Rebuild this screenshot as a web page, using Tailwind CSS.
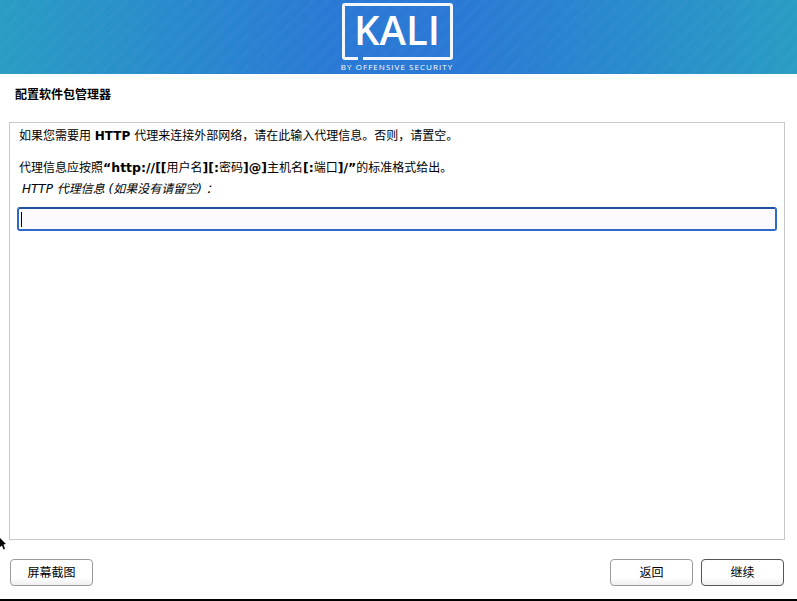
<!DOCTYPE html>
<html lang="zh">
<head>
    <meta charset="UTF-8">
    <title>配置软件包管理器</title>
    <script src="https://cdn.jsdelivr.net/npm/@tailwindcss/browser@4"></script>
</head>
<body class="w-[797px] h-[601px] overflow-hidden bg-white font-['DejaVu_Sans','Noto_Sans_CJK_SC',sans-serif] text-[12px] text-black relative">
    <!-- Banner -->
    <header class="h-[74px] flex justify-center bg-[repeating-linear-gradient(135deg,#ffffff05_0,#ffffff05_4px,transparent_4px,transparent_11px),linear-gradient(90deg,#299dc3_0%,#2a79d5_42%,#2a79d5_58%,#299dc3_100%)]">
        <div class="w-[111px] mr-[3px] pt-[3px] flex flex-col items-center text-white">
            <div class="relative w-[111px] h-[57px] border-[3px] border-[#f4f8fd] rounded-[3px] flex justify-center items-center">
                <span class="font-['Open_Sans',sans-serif] font-semibold text-[40px] leading-none mt-[-4px]">KALI</span>
                <span class="absolute left-[13px] bottom-[-3px] w-[5px] h-[3px] bg-[#2a79d5]"></span>
            </div>
            <span class="font-['Open_Sans',sans-serif] font-medium text-[8px] leading-none mt-[3px] tracking-[1.05px] whitespace-nowrap">BY OFFENSIVE SECURITY</span>
        </div>
    </header>

    <!-- Title -->
    <h1 class="h-[48px] pl-[15px] pt-[14px] text-[12px] leading-[14px] font-bold">配置软件包管理器</h1>

    <!-- Panel -->
    <main class="ml-[9px] w-[776px] h-[418px] border border-[#c8c8c8] pl-[9px] pt-[6px]">
        <p class="leading-[14px]">如果您需要用 <b>HTTP</b> 代理来连接外部网络，请在此输入代理信息。否则，请置空。</p>
        <p class="leading-[14px] mt-[18px]">代理信息应按照<b class="text-[12.5px]">“http://[[</b>用户名<b class="text-[12.5px]">][:</b>密码<b class="text-[12.5px]">]@]</b>主机名<b class="text-[12.5px]">[:</b>端口<b class="text-[12.5px]">]/”</b>的标准格式给出。</p>
        <label for="proxy" class="block italic leading-[14px] mt-[7px] pl-[3px]">HTTP 代理信息 (如果没有请留空) ：</label>
        <input id="proxy" type="text" class="block mt-[11px] w-[760px] h-[24px] -ml-[2px] px-[2px] rounded-[3px] border-2 border-[#3069c8] border-t-[#1f4f9e] bg-[#fdfaff] outline-none">
    </main>

    <!-- Caret -->
    <span class="absolute left-[21px] top-[212px] w-px h-[15px] bg-black"></span>

    <!-- Pointer -->
    <svg class="absolute left-0 top-[538px]" width="7" height="13" viewBox="0 0 7 13"><path d="M0 0L6 6L3.5 6.5L5 11L3.5 11.5L2 7.5L0 9Z" fill="#000"/></svg>

    <!-- Buttons -->
    <footer class="flex items-center ml-[10px] mr-[13px] mt-[19px] gap-[8px]">
        <button class="w-[83px] h-[27px] rounded-[4px] border border-[#9a9a9a] bg-[linear-gradient(#ffffff_70%,#f0eef0)]">屏幕截图</button>
        <button class="ml-auto w-[83px] h-[27px] rounded-[4px] border border-[#9a9a9a] bg-[linear-gradient(#ffffff_70%,#f0eef0)]">返回</button>
        <button class="w-[83px] h-[27px] rounded-[4px] border border-[#555] bg-[linear-gradient(#ffffff_70%,#f0eef0)]">继续</button>
    </footer>

    <!-- Bottom edge -->
    <div class="absolute left-0 right-0 bottom-0 h-[2px] bg-black"></div>
</body>
</html>
